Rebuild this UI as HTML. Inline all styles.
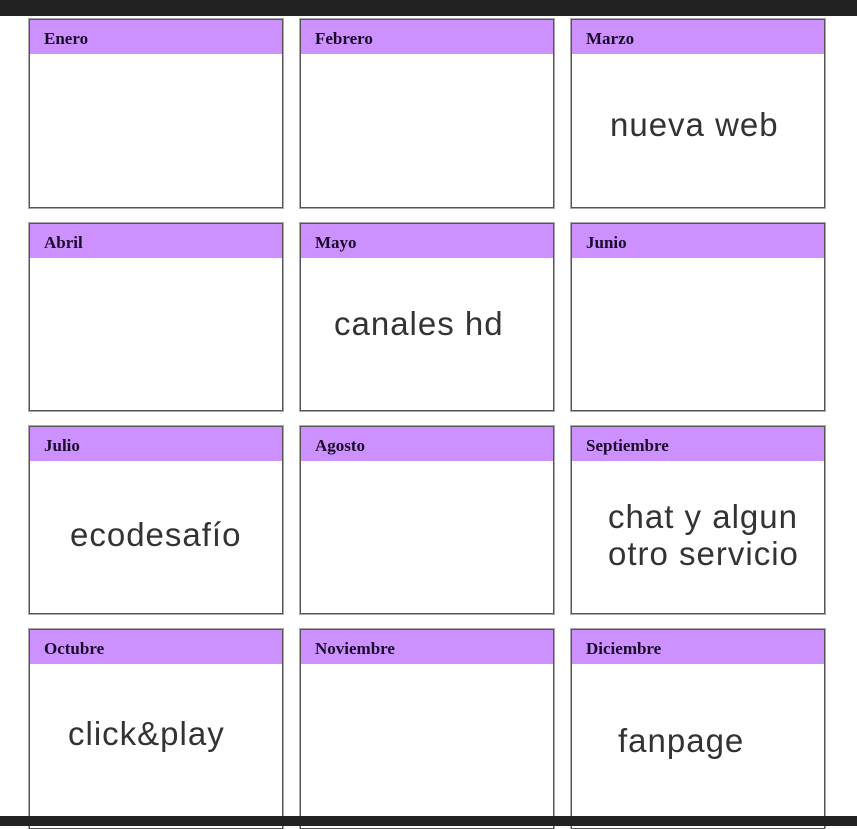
<!DOCTYPE html>
<html><head><meta charset="utf-8"><style>
body{margin:0;width:857px;height:826px;background:#fff;position:relative;overflow:hidden;font-family:"Liberation Sans",sans-serif}
.bar{position:absolute;left:0;width:857px;background:#222;z-index:5}
.b{position:absolute;width:254px;border:1px solid #555;box-shadow:0 0 0 1px #aaa;background:#fff;box-sizing:border-box}
.h{height:34px;background:#cc90ff;font-family:"Liberation Serif",serif;font-weight:bold;font-size:17px;color:#1a0a2a;padding:9px 0 0 14px;box-sizing:border-box}
.t{position:absolute;font-size:33px;letter-spacing:1px;color:#333;white-space:nowrap;line-height:37px}
</style></head><body>
<div class="bar" style="top:0;height:16px"></div>
<div class="bar" style="top:816px;height:10px"></div>

<div class="b" style="left:29px;top:19px;height:189px"><div class="h">Enero</div></div>
<div class="b" style="left:300px;top:19px;height:189px"><div class="h">Febrero</div></div>
<div class="b" style="left:571px;top:19px;height:189px"><div class="h">Marzo</div></div>

<div class="b" style="left:29px;top:223px;height:188px"><div class="h">Abril</div></div>
<div class="b" style="left:300px;top:223px;height:188px"><div class="h">Mayo</div></div>
<div class="b" style="left:571px;top:223px;height:188px"><div class="h">Junio</div></div>

<div class="b" style="left:29px;top:426px;height:188px"><div class="h">Julio</div></div>
<div class="b" style="left:300px;top:426px;height:188px"><div class="h">Agosto</div></div>
<div class="b" style="left:571px;top:426px;height:188px"><div class="h">Septiembre</div></div>

<div class="b" style="left:29px;top:629px;height:200px"><div class="h">Octubre</div></div>
<div class="b" style="left:300px;top:629px;height:200px"><div class="h">Noviembre</div></div>
<div class="b" style="left:571px;top:629px;height:200px"><div class="h">Diciembre</div></div>

<div class="t" style="left:610px;top:106px">nueva web</div>
<div class="t" style="left:334px;top:305px">canales hd</div>
<div class="t" style="left:70px;top:516px">ecodesafío</div>
<div class="t" style="left:608px;top:498px">chat y algun</div>
<div class="t" style="left:608px;top:535px">otro servicio</div>
<div class="t" style="left:68px;top:715px">click&amp;play</div>
<div class="t" style="left:618px;top:722px">fanpage</div>
</body></html>
